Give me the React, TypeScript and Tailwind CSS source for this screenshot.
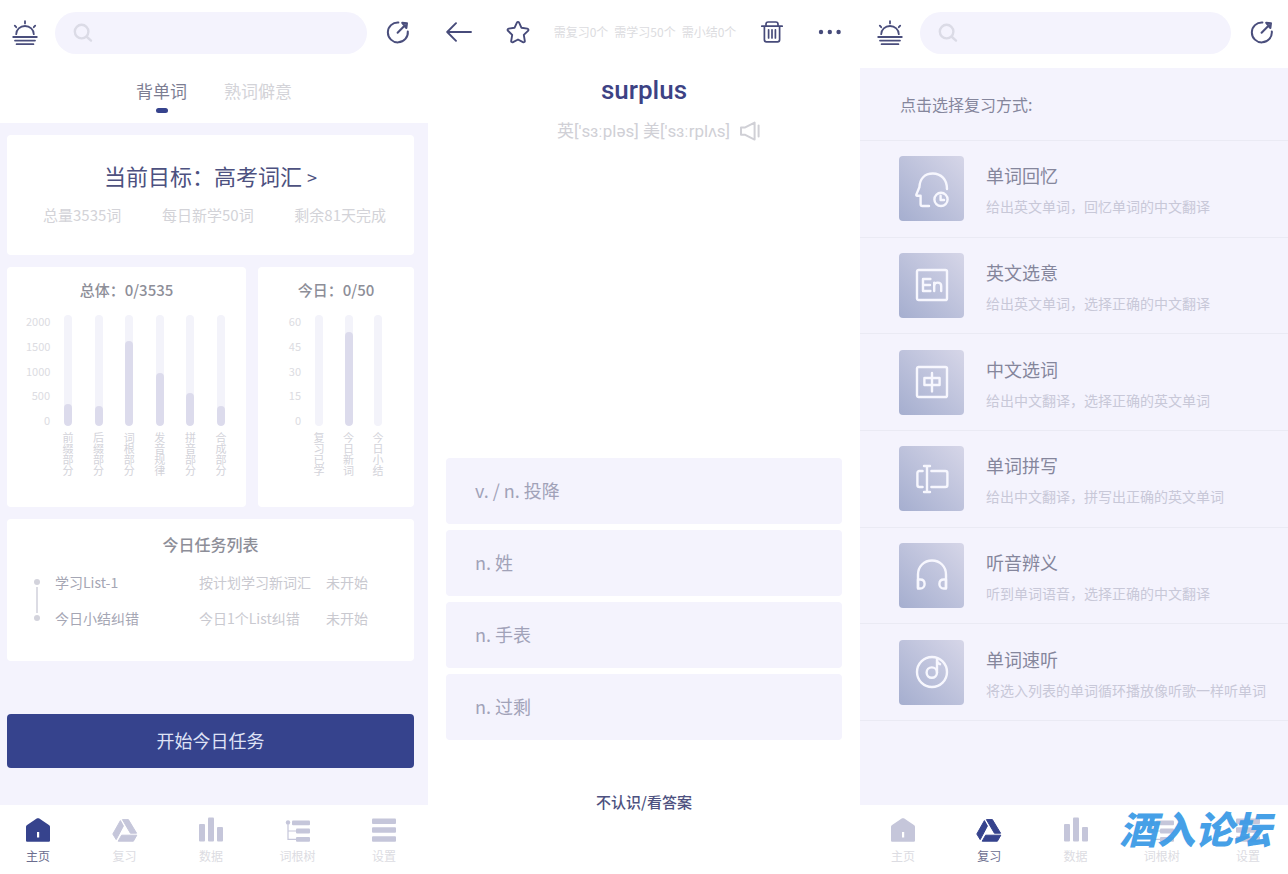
import type { ReactNode } from "react";
import clsx from "clsx";

type IconProps = { className?: string };

function SunIcon({ className }: IconProps) {
  return (
    <svg viewBox="0 0 26 26" className={className} fill="none" stroke="currentColor" strokeWidth="1.8" strokeLinecap="round">
      <path d="M4.2 14.2a8.8 8.2 0 0 1 17.6 0" />
      <path d="M13 1.2v2.2M2.8 5.6l1.4 1.6M23.2 5.6l-1.4 1.6" />
      <path d="M1.2 17h23.6M3 20.6h20M4.6 24.2h16.8" />
    </svg>
  );
}

function ShareIcon({ className }: IconProps) {
  return (
    <svg viewBox="0 0 24 24" className={className} fill="none" stroke="currentColor" strokeWidth="2" strokeLinecap="round" strokeLinejoin="round">
      <path d="M12.4 2.4A10 10 0 1 0 21.8 11.4" />
      <path d="M11.6 12.8L20 4.2M16.2 2.8l4.8.4-.6 4.8z" />
    </svg>
  );
}

function MagnifierIcon({ className }: IconProps) {
  return (
    <svg viewBox="0 0 20 20" className={className} fill="none" stroke="currentColor" strokeWidth="2.4" strokeLinecap="round">
      <circle cx="8.6" cy="8.6" r="6.8" />
      <path d="M14 14l4 3.6" />
    </svg>
  );
}

function BackIcon({ className }: IconProps) {
  return (
    <svg viewBox="0 0 26 20" className={className} fill="none" stroke="currentColor" strokeWidth="1.9" strokeLinecap="round" strokeLinejoin="round">
      <path d="M1.4 10H25M10 1.2L1.2 10l8.8 8.8" />
    </svg>
  );
}

function StarIcon({ className }: IconProps) {
  return (
    <svg viewBox="0 0 24 24" className={className} fill="none" stroke="currentColor" strokeWidth="1.9" strokeLinejoin="round">
      <path d="M10.9 2.6c.5-1 1.7-1 2.2 0l2.4 5.2 5.8.8c1.1.2 1.5 1.4.7 2.2l-4.2 4.1 1 5.9c.2 1.1-.9 1.900-1.900 1.400L12 19.500l-4.900 2.700c-1 .5-2.100-.3-1.900-1.400l1-5.900L2 10.800c-.8-.8-.4-2 .7-2.200l5.800-.8z" />
    </svg>
  );
}

function TrashIcon({ className }: IconProps) {
  return (
    <svg viewBox="0 0 24 24" className={className} fill="none" stroke="currentColor" strokeWidth="1.7" strokeLinecap="round" strokeLinejoin="round">
      <path d="M1.8 6.2h20.4M6 6V4.2C6 2.8 6.8 2 8.2 2h7.6C17.2 2 18 2.8 18 4.200V6M4.400 6.400v13.400c0 1.200.8 2 2 2h11.200c1.200 0 2-.8 2-2V6.400" />
      <path d="M8.600 9.800v8.200M12 9.800v8.200M15.400 9.800v8.200" />
    </svg>
  );
}

function MoreIcon({ className }: IconProps) {
  return (
    <svg viewBox="0 0 24 24" className={className} fill="currentColor">
      <circle cx="3" cy="12" r="2.2" />
      <circle cx="11.8" cy="12" r="2.2" />
      <circle cx="20.6" cy="12" r="2.2" />
    </svg>
  );
}

function SpeakerIcon({ className }: IconProps) {
  return (
    <svg viewBox="0 0 20 20" className={className} fill="none" stroke="currentColor" strokeWidth="2" strokeLinejoin="round">
      <path d="M1 6.4h4.2l9.4-4.8v17l-9.4-4.8H1z" />
      <path d="M18.6 4.6v11" strokeLinecap="round" />
    </svg>
  );
}

function HomeIcon({ className }: IconProps) {
  return (
    <svg viewBox="0 0 26 26" className={className} fill="currentColor">
      <path
        fillRule="evenodd"
        d="M13 1.2c.5 0 .9.1 1.3.4l9.6 6.3c.7.4 1.1 1.1 1.1 1.9V23.4c0 .9-.6 1.4-1.4 1.4H2.400C1.600 24.800 1 24.300 1 23.400V9.800c0-.8.400-1.500 1.100-1.900l9.600-6.300c.4-.3.800-.4 1.300-.4zM12 15v5.600h2.200V15z"
      />
    </svg>
  );
}

function ReviewIcon({ className }: IconProps) {
  return (
    <svg viewBox="0 0 26 26" className={className} fill="currentColor" stroke="currentColor" strokeWidth="1" strokeLinejoin="round">
      <path d="M8.4 3.6L11.4 9 4.2 22.6.8 17z" />
      <path d="M10.4 2.6h6l8.2 13.6h-6.2z" />
      <path d="M9.6 18.2h15.2l-3.4 6H6.2z" />
    </svg>
  );
}

function DataIcon({ className }: IconProps) {
  return (
    <svg viewBox="0 0 26 26" className={className} fill="currentColor">
      <rect x="1" y="7" width="6" height="17.6" rx="1" />
      <rect x="10" y="0.6" width="6" height="24" rx="1" />
      <rect x="19" y="10" width="6" height="14.6" rx="1" />
    </svg>
  );
}

function TreeIcon({ className }: IconProps) {
  return (
    <svg viewBox="0 0 26 26" className={className} fill="currentColor">
      <rect x="7" y="3.4" width="18" height="4.8" rx="1" />
      <rect x="11" y="11.6" width="14" height="4.8" rx="1" />
      <rect x="11" y="20" width="14" height="4.8" rx="1" />
      <circle cx="3" cy="5.4" r="2.2" />
      <path d="M3 5.8v16.6h8M3 14h8" fill="none" stroke="currentColor" strokeWidth="1.2" />
    </svg>
  );
}

function MenuIcon({ className }: IconProps) {
  return (
    <svg viewBox="0 0 26 26" className={className} fill="currentColor">
      <rect x="1" y="1.4" width="24" height="5.6" rx="1" />
      <rect x="1" y="10.2" width="24" height="5.6" rx="1" />
      <rect x="1" y="19.2" width="24" height="5.6" rx="1" />
    </svg>
  );
}

// white line drawings on the review tiles
const tileIcons: Record<string, ReactNode> = {
  recall: (
    <>
      <path d="M32 17C32 7.500 26 1.500 17.800 1.500S4.800 7 4.400 15.200L1.400 22.400c-.3.800 0 1.400.8 1.400h3.400v8.400c0 1.200.6 1.800 1.800 1.800H14" />
      <circle cx="26" cy="27.400" r="6.600" />
      <path d="M25.600 23.800v4.200h3.400" />
    </>
  ),
  english: (
    <>
      <rect x="2" y="2" width="30" height="30" rx="1.6" />
      <path d="M15.4 11H8v12h7.4M8 17h7M19.2 23v-8.4M19.2 18c0-2 1.4-3.4 3.6-3.4s3.4 1.4 3.4 3.4v5" />
    </>
  ),
  chinese: (
    <>
      <rect x="2" y="2" width="30" height="30" rx="1.6" />
      <path d="M9.4 13h15.2v7H9.4zM17 8v18.4" />
    </>
  ),
  spell: (
    <>
      <path d="M7.6 9H4.4C3.2 9 2.4 9.8 2.4 11v12c0 1.2.8 2 2 2h3.2M16.4 9h14c1.2 0 2 .8 2 2v12c0 1.2-.8 2-2 2h-14" />
      <path d="M12 4.4v25.2M9 4h6M9 30h6" />
    </>
  ),
  listen: (
    <>
      <path d="M3 30V16.5C3 8.5 9 2.5 17 2.5s14 6 14 14V30" />
      <path d="M3 21.5h2.2c2.6 0 4.4 1.8 4.4 4.4S7.8 30.5 5.2 30.5H3zM31 21.5h-2.2c-2.6 0-4.4 1.8-4.4 4.4s1.8 4.6 4.4 4.6H31z" />
    </>
  ),
  music: (
    <>
      <circle cx="17" cy="17" r="15" />
      <circle cx="16.8" cy="17.6" r="5.2" />
      <path d="M22 17.6V4.4c0 2.400 1 4 3 4.800" />
    </>
  ),
};

const navItems = [
  { id: "home", label: "主页", icon: HomeIcon },
  { id: "review", label: "复习", icon: ReviewIcon },
  { id: "data", label: "数据", icon: DataIcon },
  { id: "tree", label: "词根树", icon: TreeIcon },
  { id: "settings", label: "设置", icon: MenuIcon },
];

const totalBars = [
  { label: "前缀部分", value: 20 },
  { label: "后缀部分", value: 18 },
  { label: "词根部分", value: 77 },
  { label: "发音规律", value: 48 },
  { label: "拼音部分", value: 30 },
  { label: "合成部分", value: 18 },
];

const todayBars = [
  { label: "复习已学", value: 0 },
  { label: "今日新词", value: 85 },
  { label: "今日小结", value: 0 },
];

const tasks = [
  { name: "学习List-1", detail: "按计划学习新词汇", status: "未开始" },
  { name: "今日小结纠错", detail: "今日1个List纠错", status: "未开始" },
];

const options = ["v. / n. 投降", "n. 姓", "n. 手表", "n. 过剩"];

const reviewModes = [
  { icon: "recall", title: "单词回忆", detail: "给出英文单词，回忆单词的中文翻译" },
  { icon: "english", title: "英文选意", detail: "给出英文单词，选择正确的中文翻译" },
  { icon: "chinese", title: "中文选词", detail: "给出中文翻译，选择正确的英文单词" },
  { icon: "spell", title: "单词拼写", detail: "给出中文翻译，拼写出正确的英文单词" },
  { icon: "listen", title: "听音辨义", detail: "听到单词语音，选择正确的中文翻译" },
  { icon: "music", title: "单词速听", detail: "将选入列表的单词循环播放像听歌一样听单词" },
];

function SearchHeader({ className }: { className: string }) {
  return (
    <header className={clsx("flex h-[68px] shrink-0 items-start bg-white pt-3 text-[#4a4e7c]", className)}>
      <button aria-label="主题" className="mt-2 mr-[17px]">
        <SunIcon className="size-[26px]" />
      </button>
      <label className="flex h-[42px] min-w-0 flex-1 items-center gap-2 rounded-full bg-[#f4f3fd] px-[18px]">
        <MagnifierIcon className="size-5 shrink-0 text-[#dbdbe6]" />
        <input type="search" aria-label="搜索" className="min-w-0 flex-1 bg-transparent text-base outline-none" />
      </label>
      <button aria-label="分享" className="mt-2 ml-[19px]">
        <ShareIcon className="size-6" />
      </button>
    </header>
  );
}

function BottomNav({ active, className }: { active: string; className: string }) {
  return (
    <nav className={clsx("flex h-[69px] shrink-0 items-start justify-between bg-white pt-3", className)}>
      {navItems.map((item) => {
        const Icon = item.icon;
        const isActive = item.id === active;
        return (
          <a key={item.id} href={"#" + item.id} className="flex w-10 flex-col items-center gap-[7px]">
            <Icon className={clsx("size-[26px]", isActive ? "text-[#36438d]" : "text-[#c5c6da]")} />
            <span className={clsx("text-xs leading-3 whitespace-nowrap", isActive ? "text-[#6b6d8e]" : "text-[#dcdce2]")}>
              {item.label}
            </span>
          </a>
        );
      })}
    </nav>
  );
}

interface BarChartProps {
  title: string;
  ticks: number[];
  bars: { label: string; value: number }[];
  className: string;
}

function BarChart({ title, ticks, bars, className }: BarChartProps) {
  return (
    <section className="h-60 rounded bg-white pt-[11px]">
      <h3 className="text-center text-[15px] leading-6 font-medium text-[#8d8e98]">{title}</h3>
      <div className={clsx("mt-[13px] flex gap-3 pl-[19px]", className)}>
        <div className="flex h-[111px] w-6 flex-col justify-between text-right text-[11px] leading-3 text-[#dcdce2]">
          {ticks.map((tick) => (
            <span key={tick}>{tick}</span>
          ))}
        </div>
        <div className="flex flex-1 justify-between">
          {bars.map((bar) => (
            <div key={bar.label} className="flex w-3 flex-col items-center gap-[6px]">
              <div className="flex h-[111px] w-2 items-end overflow-hidden rounded-full bg-[#f3f3fa]">
                <div className="w-full rounded-full bg-[#dcdbec]" style={{ height: `${bar.value}%` }} />
              </div>
              <span className="text-[11px] leading-3 whitespace-nowrap text-[#d3d3da] [writing-mode:vertical-rl]">
                {bar.label}
              </span>
            </div>
          ))}
        </div>
      </div>
    </section>
  );
}

function HomePanel() {
  return (
    <section className="flex min-h-screen flex-col bg-[#f4f3fd]">
      <SearchHeader className="pr-[18px] pl-3" />
      <div className="flex h-[55px] justify-center gap-[37px] bg-white pt-[11px] text-[17px] leading-6">
        <button className="flex flex-col items-center gap-[5px] self-start text-[#7c7d92]">
          背单词
          <span className="h-[5px] w-3 rounded-sm bg-[#36438d]" />
        </button>
        <button className="self-start text-[#d3d3d8]">熟词僻意</button>
      </div>

      <main className="flex flex-1 flex-col gap-3 pt-3 pr-[14px] pl-[7px]">
        <section className="h-[120px] rounded bg-white pt-6">
          <h2 className="text-center text-[22px] leading-8 text-[#4d5180]">
            <button>
              当前目标：高考词汇 <span className="text-lg">&gt;</span>
            </button>
          </h2>
          <div className="mt-3 flex justify-between pr-7 pl-9 text-[15px] leading-6 whitespace-nowrap text-[#d3d3d8]">
            <span>总量3535词</span>
            <span>每日新学50词</span>
            <span>剩余81天完成</span>
          </div>
        </section>

        <div className="grid grid-cols-[239fr_156fr] gap-3">
          <BarChart title="总体：0/3535" ticks={[2000, 1500, 1000, 500, 0]} bars={totalBars} className="pr-[19px]" />
          <BarChart title="今日：0/50" ticks={[60, 45, 30, 15, 0]} bars={todayBars} className="pr-[30px]" />
        </div>

        <section className="h-[142px] rounded bg-white pt-[13px]">
          <h3 className="text-center text-base leading-6 font-medium text-[#8d8e98]">今日任务列表</h3>
          <div className="mt-2 flex pr-10 pl-[27px] text-sm leading-9 whitespace-nowrap">
            <div className="flex flex-col items-center py-[15px]">
              <span className="size-[6px] rounded-full bg-[#d3d3dc]" />
              <span className="my-[2px] w-[2px] flex-1 bg-[#dcdce4]" />
              <span className="size-[6px] rounded-full bg-[#d3d3dc]" />
            </div>
            <ul className="ml-[15px] flex-1">
              {tasks.map((task) => (
                <li key={task.name} className="flex text-[#c9c9d0]">
                  <span className="w-36 text-[#a5a6b4]">{task.name}</span>
                  <span className="w-[127px]">{task.detail}</span>
                  <span>{task.status}</span>
                </li>
              ))}
            </ul>
          </div>
        </section>

        <button className="mt-auto mb-[37px] h-[54px] rounded bg-[#36438d] pb-[2px] text-lg text-[#dfe2f6]">开始今日任务</button>
      </main>

      <BottomNav active="home" className="pr-6 pl-[18px]" />
    </section>
  );
}

function WordPanel() {
  return (
    <section className="flex min-h-screen flex-col bg-white px-[18px]">
      <header className="flex h-16 items-center justify-between text-[#474b7a]">
        <button aria-label="返回">
          <BackIcon className="h-5 w-[26px]" />
        </button>
        <div className="flex items-center gap-6">
          <button aria-label="收藏">
            <StarIcon className="size-6" />
          </button>
          <p className="flex gap-[6px] text-xs whitespace-nowrap text-[#dcdce0]">
            <span>需复习0个</span>
            <span>需学习50个</span>
            <span>需小结0个</span>
          </p>
          <button aria-label="删除">
            <TrashIcon className="size-6" />
          </button>
        </div>
        <button aria-label="更多">
          <MoreIcon className="size-6" />
        </button>
      </header>

      <h1 className="mt-2 text-center font-[Roboto,sans-serif] text-[26px] leading-9 font-medium text-[#3d4284]">surplus</h1>
      <div className="mt-[11px] flex items-center justify-center gap-[10px] pl-[29px] text-[17px] leading-6 text-[#d0d0d6]">
        <span className="font-[Roboto,'Noto_Sans_CJK_SC',sans-serif]">英['sɜːpləs] 美['sɜːrplʌs]</span>
        <button aria-label="发音">
          <SpeakerIcon className="size-5" />
        </button>
      </div>

      <div className="mt-auto flex flex-col gap-[6px]">
        {options.map((option) => (
          <button key={option} className="h-[66px] rounded-sm bg-[#f4f3fd] px-[29px] pb-[2px] text-left text-lg text-[#a1a2b8]">
            {option}
          </button>
        ))}
      </div>
      <button className="mt-[46px] mb-14 h-8 self-center text-[15px] font-medium text-[#4d5180]">不认识/看答案</button>
    </section>
  );
}

function ReviewPanel() {
  return (
    <section className="relative flex min-h-screen flex-col bg-[#f4f3fd]">
      <SearchHeader className="pr-[14px] pl-[17px]" />
      <main className="flex-1">
        <h2 className="flex h-[73px] items-center border-b border-[#eaeaf4] pl-10 text-base text-[#85869c]">点击选择复习方式:</h2>
        <ul className="grid min-h-[580px] auto-rows-fr">
          {reviewModes.map((mode) => (
            <li key={mode.icon} className="border-b border-[#eaeaf4]">
              <button className="flex h-full w-full items-center gap-[22px] pl-[39px] text-left whitespace-nowrap">
                <span className="flex size-[65px] shrink-0 items-center justify-center rounded bg-linear-to-tr from-[#a5aecf] to-[#d6d6e8]">
                  <svg viewBox="0 0 34 34" className="size-[34px] overflow-visible text-[#f7f7fe]" fill="none" stroke="currentColor" strokeWidth="2.4" strokeLinecap="round" strokeLinejoin="round">
                    {tileIcons[mode.icon]}
                  </svg>
                </span>
                <span className="flex flex-col gap-[7px]">
                  <span className="text-lg leading-7 text-[#85869c]">{mode.title}</span>
                  <span className="text-sm leading-5 text-[#c8c8d8]">{mode.detail}</span>
                </span>
              </button>
            </li>
          ))}
        </ul>
      </main>
      <BottomNav active="review" className="pr-5 pl-[23px]" />
      <span className="pointer-events-none absolute right-[17px] bottom-7 text-[38px] leading-9 font-black whitespace-nowrap text-[#3d9be6] italic opacity-95">
        酒入论坛
      </span>
    </section>
  );
}

export default function App() {
  return (
    <div className="grid min-h-screen grid-cols-[428fr_432fr_428fr] bg-white font-['Noto_Sans_CJK_SC',sans-serif]">
      <HomePanel />
      <WordPanel />
      <ReviewPanel />
    </div>
  );
}
